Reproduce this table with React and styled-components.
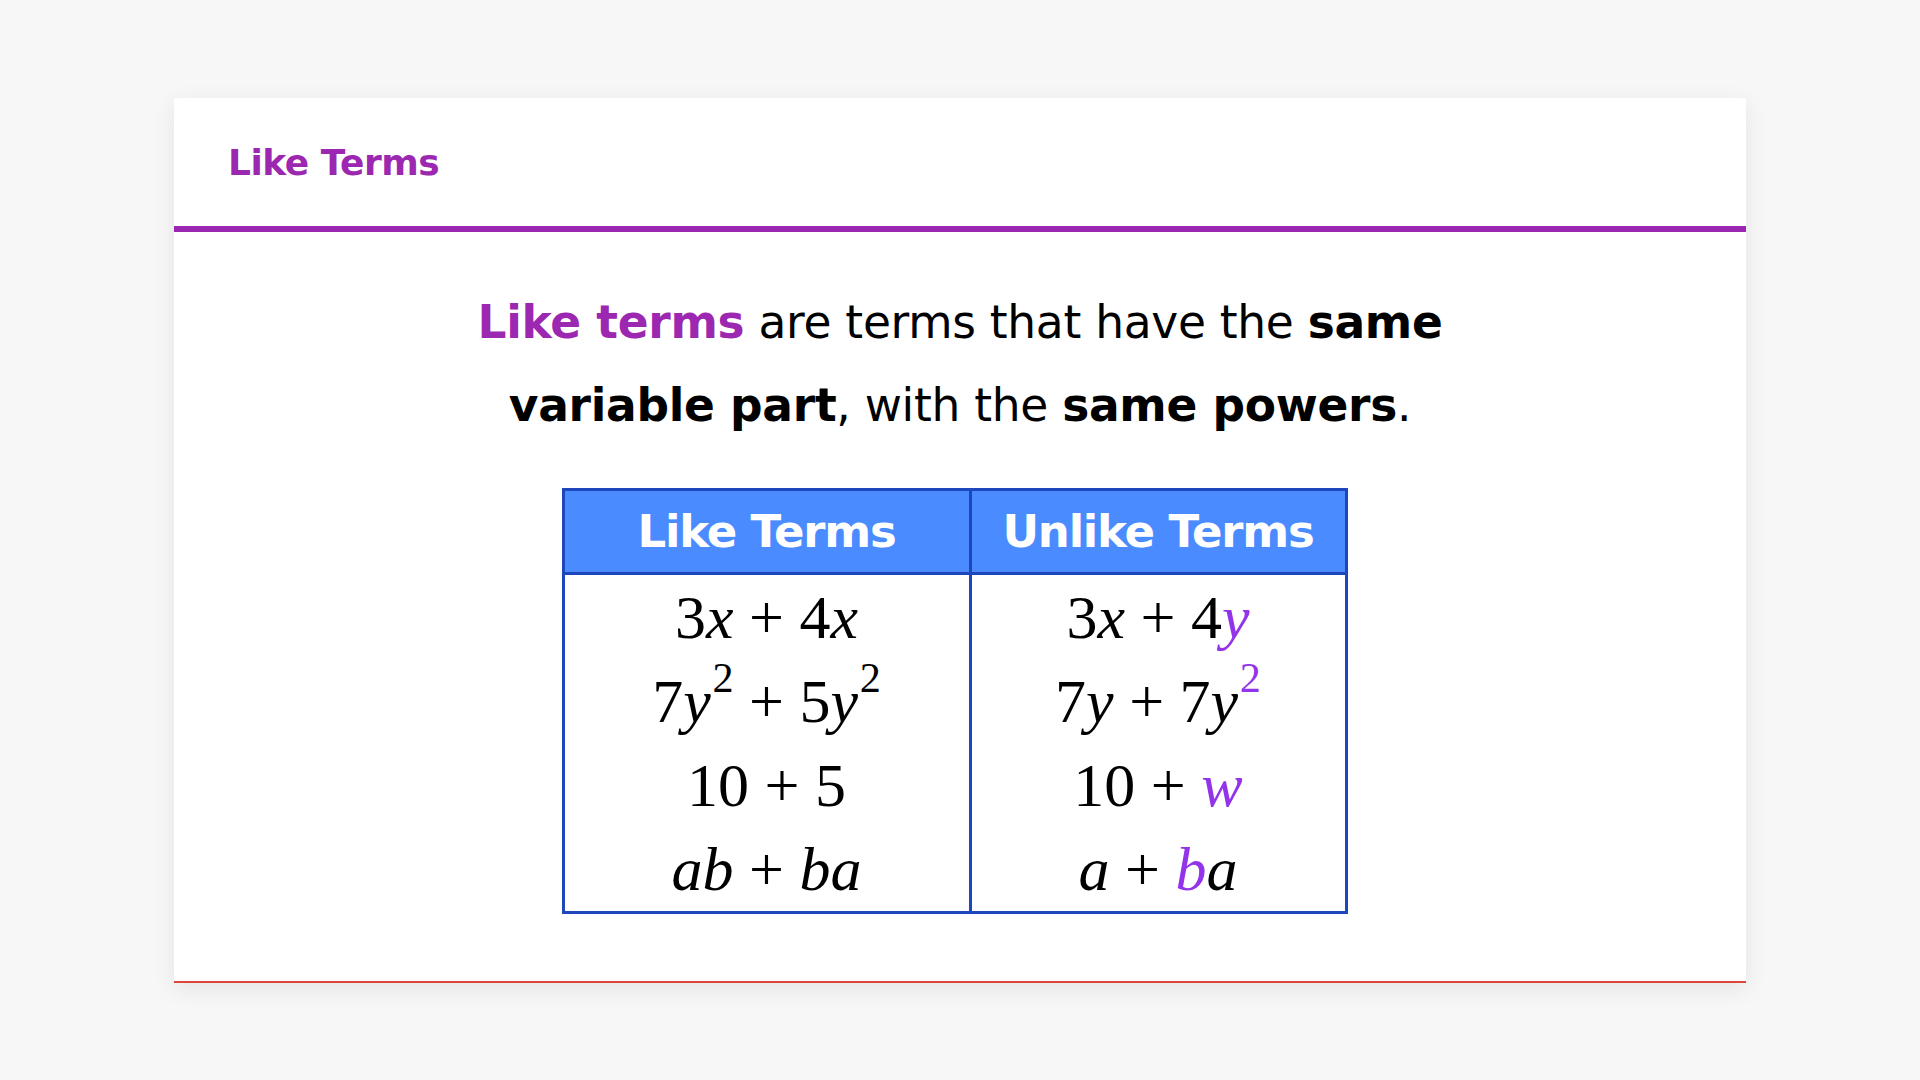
import React from 'react';
import styled, { createGlobalStyle } from 'styled-components';

const GlobalStyle = createGlobalStyle`
  html, body {
    margin: 0;
    padding: 0;
    background: #f7f7f7;
  }
  body {
    font-family: "DejaVu Sans", "Noto Sans", sans-serif;
  }
`;

const Page = styled.div`
  padding: 98px 0 99px;
`;

const Card = styled.section`
  width: 1572px;
  margin: 0 auto;
  background: #fff;
  border-bottom: 2px solid #e0453a;
  box-shadow: 0 6px 22px rgba(0, 0, 0, 0.08);
`;

const Header = styled.header`
  height: 128px;
  display: flex;
  align-items: center;
  padding-left: 54px;
  border-bottom: 6px solid #9c27b0;
`;

const Title = styled.h1`
  margin: 0;
  font-size: 36px;
  font-weight: 700;
  color: #9c27b0;
  letter-spacing: -0.5px;
`;

const Body = styled.div`
  display: flex;
  flex-direction: column;
  align-items: center;
  padding: 49px 0 67px;
`;

const Lead = styled.p`
  margin: 0 0 41px;
  text-align: center;
  font-size: 45.5px;
  line-height: 83px;
  letter-spacing: -0.3px;
  color: #000;
`;

const Strong = styled.b`
  font-weight: 700;
  color: ${p => p.accent ? '#9c27b0' : '#000'};
`;

const Table = styled.table`
  border-collapse: collapse;
  border: 3px solid #1f47bd;
  margin-right: 11px;
`;

const Th = styled.th`
  width: ${p => p.w}px;
  height: 81px;
  padding: 0;
  background: #4a8cff;
  color: #fff;
  font-size: 45px;
  font-weight: 700;
  letter-spacing: -1.2px;
  border-right: 3px solid #1f47bd;
  border-bottom: 3px solid #1f47bd;
`;

const Td = styled.td`
  height: 84px;
  padding: 0;
  text-align: center;
  border-right: 3px solid #1f47bd;
`;

const MathRow = styled.span`
  font-family: "Liberation Serif", "DejaVu Serif", serif;
  font-size: 62px;
  line-height: 1;
  color: #000;
  white-space: nowrap;
`;

const Var = styled.i`
  font-style: italic;
  color: ${p => p.hl ? '#9333ea' : 'inherit'};
`;

const Num = styled.span`
  color: ${p => p.hl ? '#9333ea' : 'inherit'};
`;

const Op = styled.span`
  margin: 0 0.25em;
`;

const Sup = styled.sup`
  font-size: 0.68em;
  line-height: 0;
  vertical-align: 0.72em;
  margin-left: 0.04em;
  color: ${p => p.hl ? '#9333ea' : 'inherit'};
`;

// each cell is a list of parts: a digit string, '+', or a variable {v, hl, sup, supHl}
const rows = [
  [
    ['3', { v: 'x' }, '+', '4', { v: 'x' }],
    ['3', { v: 'x' }, '+', '4', { v: 'y', hl: true }],
  ],
  [
    ['7', { v: 'y', sup: '2' }, '+', '5', { v: 'y', sup: '2' }],
    ['7', { v: 'y' }, '+', '7', { v: 'y', sup: '2', supHl: true }],
  ],
  [
    ['10', '+', '5'],
    ['10', '+', { v: 'w', hl: true }],
  ],
  [
    [{ v: 'a' }, { v: 'b' }, '+', { v: 'b' }, { v: 'a' }],
    [{ v: 'a' }, '+', { v: 'b', hl: true }, { v: 'a' }],
  ],
];

const Expr = ({ parts }) => (
  <MathRow>
    {parts.map((p, i) => {
      if (p === '+') return <Op key={i}>+</Op>;
      if (typeof p === 'string') return <Num key={i}>{p}</Num>;
      return (
        <React.Fragment key={i}>
          <Var hl={p.hl}>{p.v}</Var>
          {p.sup && <Sup hl={p.supHl}>{p.sup}</Sup>}
        </React.Fragment>
      );
    })}
  </MathRow>
);

const App = () => (
  <Page>
    <GlobalStyle />
    <Card>
      <Header>
        <Title>Like Terms</Title>
      </Header>
      <Body>
        <Lead>
          <Strong accent>Like terms</Strong> are terms that have the <Strong>same</Strong>
          <br />
          <Strong>variable part</Strong>, with the <Strong>same powers</Strong>.
        </Lead>
        <Table>
          <thead>
            <tr>
              <Th w={404}>Like Terms</Th>
              <Th w={373}>Unlike Terms</Th>
            </tr>
          </thead>
          <tbody>
            {rows.map((r, i) => (
              <tr key={i}>
                <Td><Expr parts={r[0]} /></Td>
                <Td><Expr parts={r[1]} /></Td>
              </tr>
            ))}
          </tbody>
        </Table>
      </Body>
    </Card>
  </Page>
);

export default App;
